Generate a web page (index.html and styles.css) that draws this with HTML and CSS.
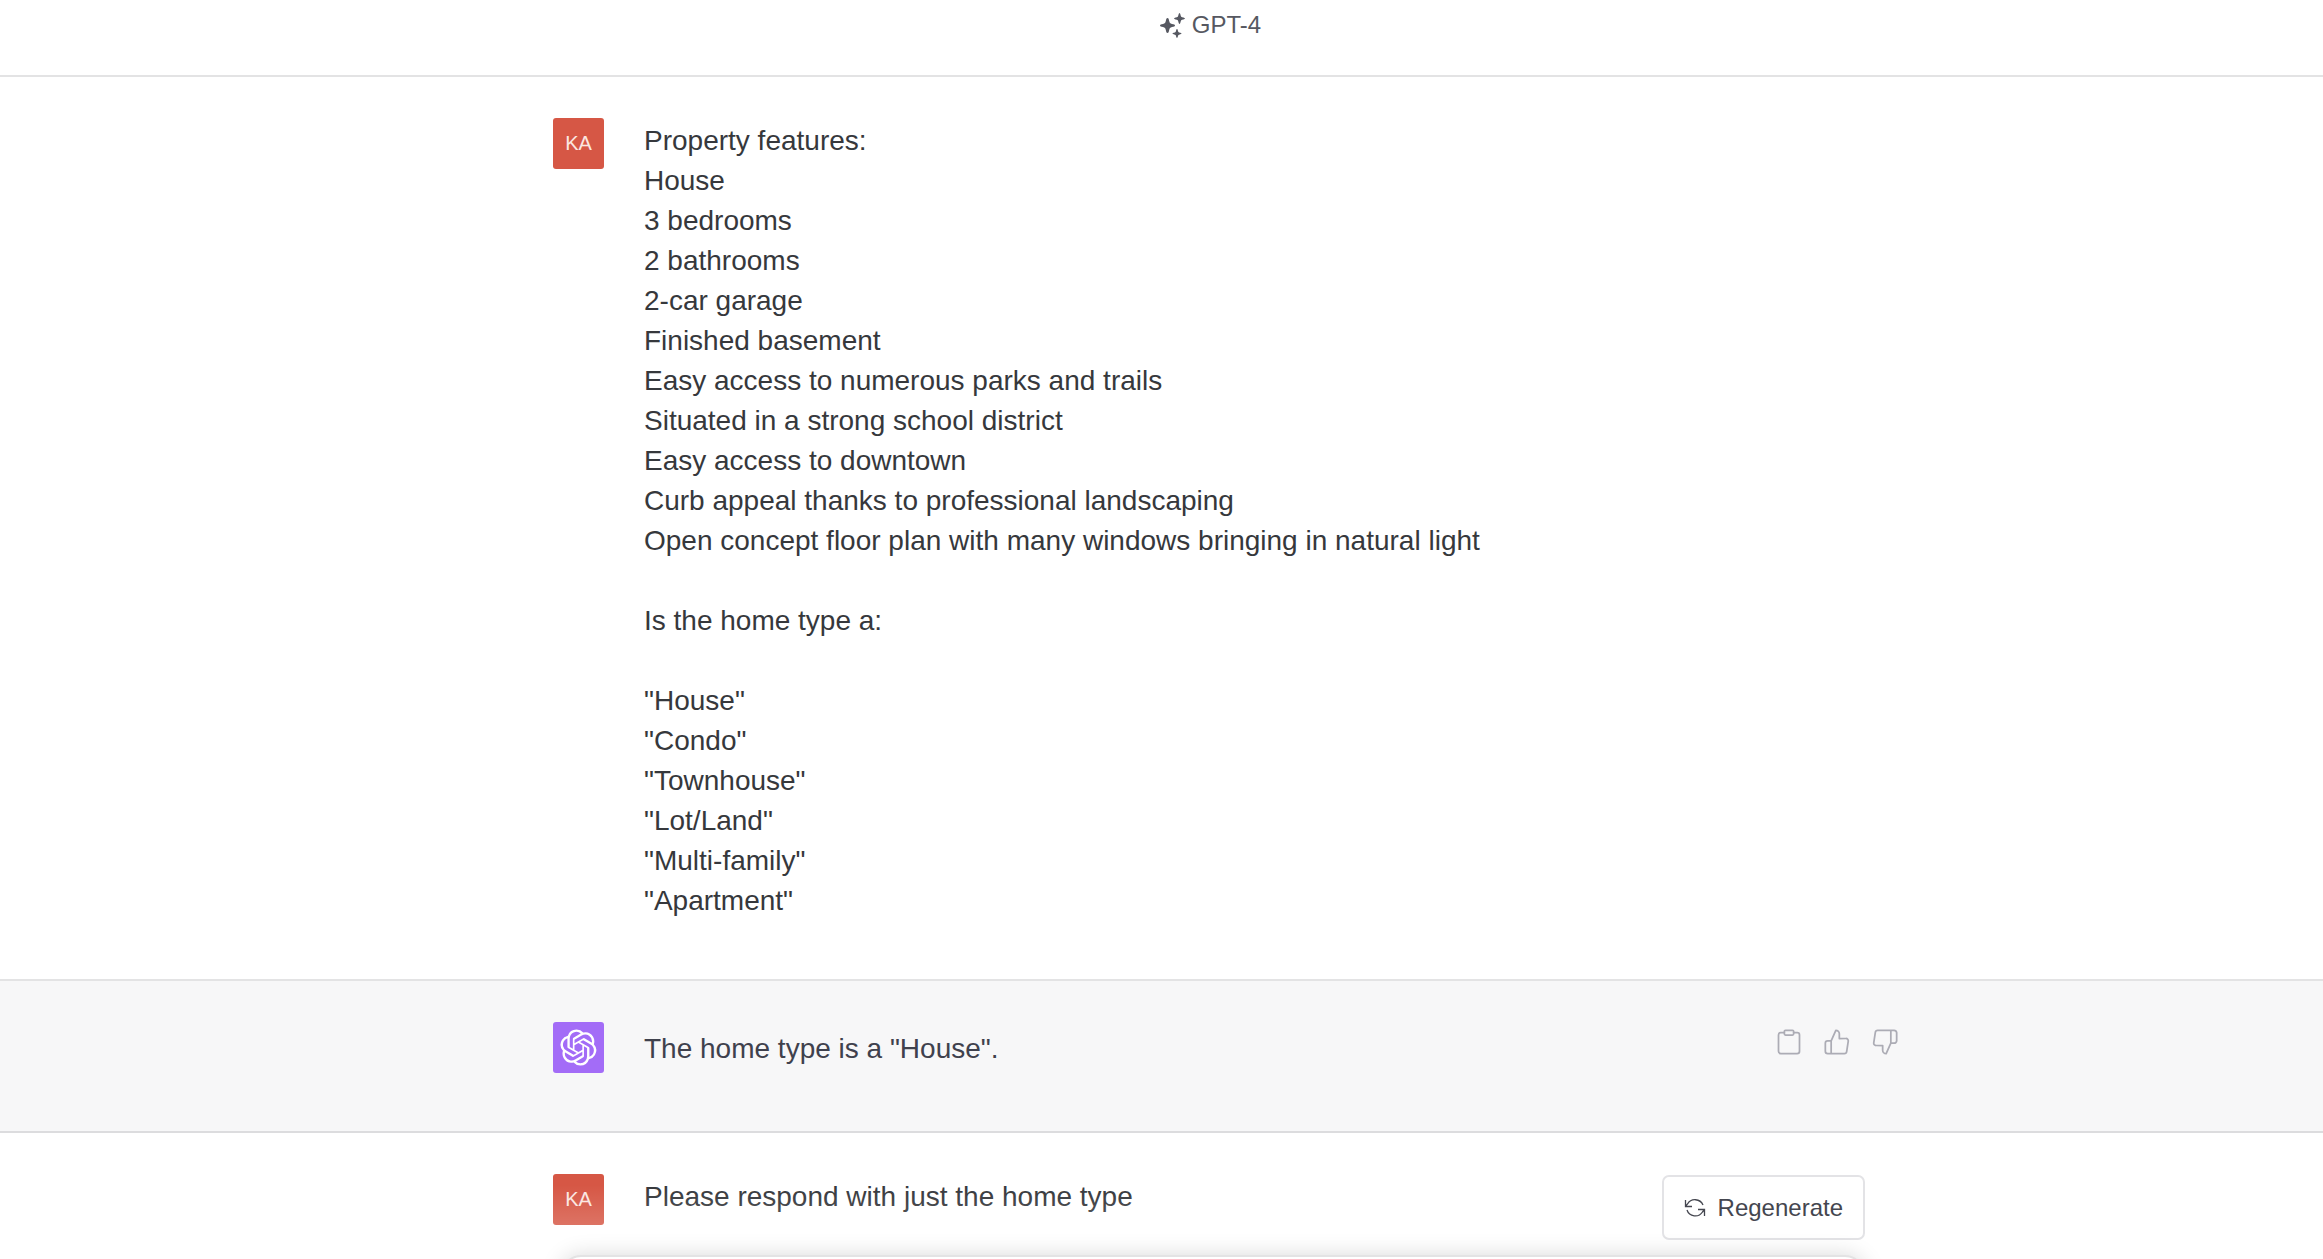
FILE: index.html
```html
<!DOCTYPE html>
<html lang="en">
<head>
<meta charset="utf-8">
<title>Home type</title>
<link rel="stylesheet" href="styles.css">
</head>
<body>
<main class="chat">
  <header class="model">
    <svg class="model-icon" viewBox="0 0 26 26" aria-hidden="true">
      <path d="M7.500 6C8.500 6 8.800 7 9.200 9C9.700 11 10 11.400 12 11.900C14 12.300 15 12.600 15 13.500C15 14.400 14 14.700 12 15.100C10 15.600 9.700 16 9.200 18C8.800 20 8.500 21 7.500 21C6.500 21 6.200 20 5.800 18C5.300 16 5 15.600 3 15.100C1 14.700 0 14.400 0 13.500C0 12.600 1 12.300 3 11.900C5 11.400 5.300 11 5.800 9C6.200 7 6.500 6 7.500 6z"/>
      <path d="M19.500 1C20.400 1 20.500 4 21.200 4.800C22 5.500 25 5.600 25 6.500C25 7.400 22 7.500 21.200 8.200C20.500 9 20.400 12 19.500 12C18.600 12 18.500 9 17.800 8.200C17 7.500 14 7.400 14 6.500C14 5.600 17 5.500 17.800 4.800C18.500 4 18.600 1 19.500 1z"/>
      <path d="M17 17C17.800 17 17.900 19.200 18.400 19.900C19 20.500 21.500 20.700 21.500 21.500C21.500 22.300 19 22.500 18.400 23.100C17.900 23.800 17.800 26 17 26C16.200 26 16.100 23.800 15.600 23.100C15 22.500 12.500 22.300 12.500 21.500C12.500 20.700 15 20.500 15.600 19.900C16.100 19.200 16.200 17 17 17z"/>
    </svg>
    <span>GPT-4</span>
  </header>

  <article class="message">
    <div class="message-inner">
      <div class="avatar user">KA</div>
      <div class="text">Property features:
House
3 bedrooms
2 bathrooms
2-car garage
Finished basement
Easy access to numerous parks and trails
Situated in a strong school district
Easy access to downtown
Curb appeal thanks to professional landscaping
Open concept floor plan with many windows bringing in natural light

Is the home type a:

"House"
"Condo"
"Townhouse"
"Lot/Land"
"Multi-family"
"Apartment"</div>
    </div>
  </article>

  <article class="message reply">
    <div class="message-inner">
      <div class="avatar bot">
        <svg viewBox="0 0 41 41" role="img" aria-label="ChatGPT"><path d="M37.532 16.871a9.963 9.963 0 0 0-.856-8.184 10.078 10.078 0 0 0-10.855-4.835A9.964 9.964 0 0 0 18.306.500a10.079 10.079 0 0 0-9.614 6.977 9.967 9.967 0 0 0-6.664 4.834 10.080 10.080 0 0 0 1.240 11.817 9.965 9.965 0 0 0 .856 8.185 10.079 10.079 0 0 0 10.855 4.835 9.965 9.965 0 0 0 7.516 3.350 10.078 10.078 0 0 0 9.617-6.981 9.967 9.967 0 0 0 6.663-4.834 10.079 10.079 0 0 0-1.243-11.812zM22.498 37.886a7.474 7.474 0 0 1-4.799-1.735c.061-.033.168-.091.237-.134l7.964-4.600a1.294 1.294 0 0 0 .655-1.134V19.054l3.366 1.944a.120.120 0 0 1 .066.092v9.299a7.505 7.505 0 0 1-7.490 7.496zM6.392 31.006a7.471 7.471 0 0 1-.894-5.023c.060.036.162.099.237.141l7.964 4.600a1.297 1.297 0 0 0 1.308 0l9.724-5.614v3.888a.120.120 0 0 1-.048.103l-8.051 4.649a7.504 7.504 0 0 1-10.240-2.744zM4.297 13.620A7.469 7.469 0 0 1 8.200 10.333c0 .068-.004.190-.004.274v9.201a1.294 1.294 0 0 0 .654 1.132l9.723 5.614-3.366 1.944a.120.120 0 0 1-.114.010L7.040 23.856a7.504 7.504 0 0 1-2.743-10.236zm27.658 6.437-9.724-5.615 3.367-1.943a.121.121 0 0 1 .113-.010l8.052 4.648a7.498 7.498 0 0 1-1.158 13.528V21.190a1.293 1.293 0 0 0-.650-1.133zm3.350-5.043c-.059-.037-.162-.099-.236-.141l-7.965-4.600a1.298 1.298 0 0 0-1.308 0l-9.723 5.614v-3.888a.120.120 0 0 1 .048-.103l8.050-4.645a7.497 7.497 0 0 1 11.135 7.763zm-21.063 6.929-3.367-1.944a.120.120 0 0 1-.065-.092v-9.299a7.497 7.497 0 0 1 12.293-5.756 6.940 6.940 0 0 0-.236.134l-7.965 4.600a1.294 1.294 0 0 0-.654 1.132l-.006 11.225zm1.829-3.943 4.330-2.501 4.332 2.500v5l-4.331 2.500-4.331-2.500V18z"/></svg>
      </div>
      <div class="text">The home type is a "House".</div>
      <div class="actions">
        <button type="button" aria-label="Copy"><svg viewBox="0 0 24 24"><path d="M16 4h3a2 2 0 0 1 2 2v14a2 2 0 0 1-2 2H5a2 2 0 0 1-2-2V6a2 2 0 0 1 2-2h3"/><rect x="8" y="2" width="8" height="4" rx="1"/></svg></button>
        <button type="button" aria-label="Good response"><svg viewBox="0 0 24 24"><path d="M14 9V5a3 3 0 0 0-3-3l-4 9v11h11.280a2 2 0 0 0 2-1.700l1.380-9a2 2 0 0 0-2-2.300zM7 22H4a2 2 0 0 1-2-2v-7a2 2 0 0 1 2-2h3"/></svg></button>
        <button type="button" aria-label="Bad response"><svg viewBox="0 0 24 24"><path d="M10 15v4a3 3 0 0 0 3 3l4-9V2H5.720a2 2 0 0 0-2 1.700l-1.380 9a2 2 0 0 0 2 2.300zM17 2h2.670A2.310 2.310 0 0 1 22 4v7a2.310 2.310 0 0 1-2.330 2H17"/></svg></button>
      </div>
    </div>
  </article>

  <article class="message">
    <div class="message-inner">
      <div class="avatar user">KA</div>
      <div class="text">Please respond with just the home type</div>
    </div>
  </article>

  <form class="composer">
    <div class="composer-inner">
      <button type="button" class="regenerate">
        <svg viewBox="0 0 22 22" aria-hidden="true"><path d="M1.500 3v6.500H8M20.500 19v-6.500H14M19 8A8.700 8.700 0 0 0 3.500 7L1.500 9.500M20.500 12.500L18.500 15A8.700 8.700 0 0 1 3 13"/></svg>
        Regenerate
      </button>
      <textarea class="prompt" aria-label="Message" rows="1"></textarea>
    </div>
  </form>
</main>
</body>
</html>
```
FILE: styles.css
```css
* {
  box-sizing: border-box;
}

body {
  margin: 0;
  background: #fff;
  color: #343541;
  font-family: "Liberation Sans", Arial, sans-serif;
}

button {
  font: inherit;
  cursor: pointer;
}

.chat {
  position: relative;
  height: 100vh;
  overflow: hidden;
}

.model {
  display: flex;
  align-items: center;
  justify-content: center;
  gap: 6px;
  height: 77px;
  padding: 0 0 26px 98px;
  border-bottom: 2px solid #e3e3e4;
  color: #565861;
  font-size: 24px;
}

.model-icon {
  width: 26px;
  height: 26px;
  fill: #565861;
}

.message {
  padding: 41px 0 58px 95px;
  border-bottom: 2px solid #e3e3e4;
}

.message-inner {
  display: flex;
  align-items: flex-start;
  gap: 40px;
  max-width: 1312px;
  margin: 0 auto;
}

.avatar {
  display: flex;
  flex: none;
  align-items: center;
  justify-content: center;
  width: 51px;
  height: 51px;
  border-radius: 3px;
  color: #fbe6e1;
  font-size: 20px;
}

.user {
  background: #d65745;
}

.bot {
  background: #a36cf7;
}

.bot svg {
  width: 37px;
  height: 37px;
  fill: #fff;
}

.text {
  flex: 1;
  padding-top: 3px;
  color: #36383c;
  font-size: 28px;
  line-height: 40px;
  white-space: pre-wrap;
}

.reply {
  border-bottom-color: #dcdcde;
  background: #f7f7f8;
}

.reply .text {
  padding-top: 7px;
  color: #3f414d;
}

.actions {
  display: flex;
  gap: 20px;
  margin: 6px -34px 0 0;
}

.actions button {
  display: flex;
  padding: 0;
  border: 0;
  background: none;
}

.actions svg {
  width: 28px;
  height: 28px;
  fill: none;
  stroke: #acacb5;
  stroke-width: 1.5px;
  stroke-linecap: round;
  stroke-linejoin: round;
}

.composer {
  position: absolute;
  right: 0;
  bottom: -76px;
  left: 0;
  padding-left: 95px;
  background: linear-gradient(rgba(255, 255, 255, 0) 10px, #fff 250px);
}

.composer-inner {
  display: flex;
  flex-direction: column;
  align-items: flex-end;
  gap: 15px;
  max-width: 1312px;
  margin: 0 auto;
}

.regenerate {
  display: flex;
  align-items: center;
  gap: 12px;
  height: 65px;
  padding: 0 20px;
  border: 2px solid #e3e3e6;
  border-radius: 7px;
  background: #fff;
  color: #44464f;
  font-size: 24px;
}

.regenerate svg {
  width: 22px;
  height: 22px;
  fill: none;
  stroke: #44464f;
  stroke-width: 1.3px;
}

.prompt {
  align-self: stretch;
  height: 80px;
  margin-left: 8px;
  border: 2px solid #e3e3e4;
  border-radius: 20px;
  background: #fff;
  box-shadow: 0 0 22px rgba(0, 0, 0, 0.15);
  font: inherit;
  resize: none;
}
```
